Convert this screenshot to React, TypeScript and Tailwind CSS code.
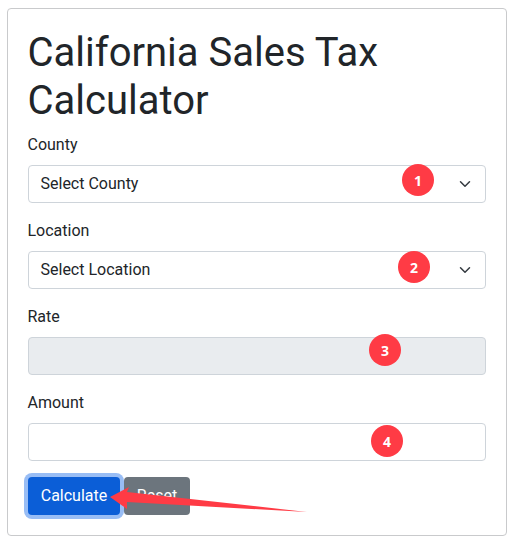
import React from 'react';

const font = { fontFamily: 'Roboto, sans-serif' };

const Chevron = () => (
  <svg className="absolute right-3 top-3" width="16" height="12" viewBox="0 0 16 16" fill="none">
    <path d="M2 5l6 6 6-6" stroke="#343a40" strokeWidth="2" strokeLinecap="round" strokeLinejoin="round" />
  </svg>
);

const Marker = ({ n, className }: { n: number; className: string }) => (
  <div
    className={`absolute flex h-8 w-8 items-center justify-center rounded-full bg-[#ff3b45] text-[14px] font-bold text-white ${className}`}
    style={{ fontFamily: '"Open Sans", sans-serif' }}
  >
    {n}
  </div>
);

const SelectField = ({ label, value }: { label: string; value: string }) => (
  <div className="mb-4">
    <div className="mb-2 h-6 text-base leading-6 -ml-[0.5px]">{label}</div>
    <div className="relative h-[38px] rounded-[4px] border border-[#ced4da] bg-white pl-[11.5px] pr-3 py-[6px] text-base leading-6 text-[#212529]">
      {value}
      <Chevron />
    </div>
  </div>
);

export default function App() {
  return (
    <div className="relative h-[544px] w-[516px] overflow-hidden bg-white text-[#212529]" style={font}>
      <div className="ml-[7px] mt-2 w-[500px] rounded-[4px] border border-[#c9cacc] p-5">
        <h1 className="mb-2 -ml-[0.5px] text-[40px] font-normal leading-[48px]">California Sales Tax Calculator</h1>
        <SelectField label="County" value="Select County" />
        <SelectField label="Location" value="Select Location" />
        <div className="mb-4">
          <div className="mb-2 h-6 text-base leading-6 -ml-[0.5px]">Rate</div>
          <div className="h-[38px] rounded-[4px] border border-[#ced4da] bg-[#e9ecef]" />
        </div>
        <div className="mb-4">
          <div className="mb-2 h-6 text-base leading-6 -ml-[0.5px]">Amount</div>
          <div className="h-[38px] rounded-[4px] border border-[#ced4da] bg-white" />
        </div>
        <div className="flex gap-1">
          <button className="h-[38px] w-[92px] rounded-[4px] bg-[#0b5ed7] text-base leading-6 text-white shadow-[0_0_0_4px_#98bdf5]">
            Calculate
          </button>
          <button className="h-[38px] w-[66px] rounded-[4px] bg-[#6c757d] text-base leading-6 text-white">
            Reset
          </button>
        </div>
      </div>
      <Marker n={1} className="left-[402px] top-[164px]" />
      <Marker n={2} className="left-[398px] top-[251px]" />
      <Marker n={3} className="left-[369px] top-[334px]" />
      <Marker n={4} className="left-[371px] top-[425px]" />
      <svg className="absolute left-0 top-0" width="516" height="544" viewBox="0 0 516 544">
        <polygon points="110,497 129,487 127,492 307,512 127,502 127,509" fill="#ff3b45" />
      </svg>
    </div>
  );
}
